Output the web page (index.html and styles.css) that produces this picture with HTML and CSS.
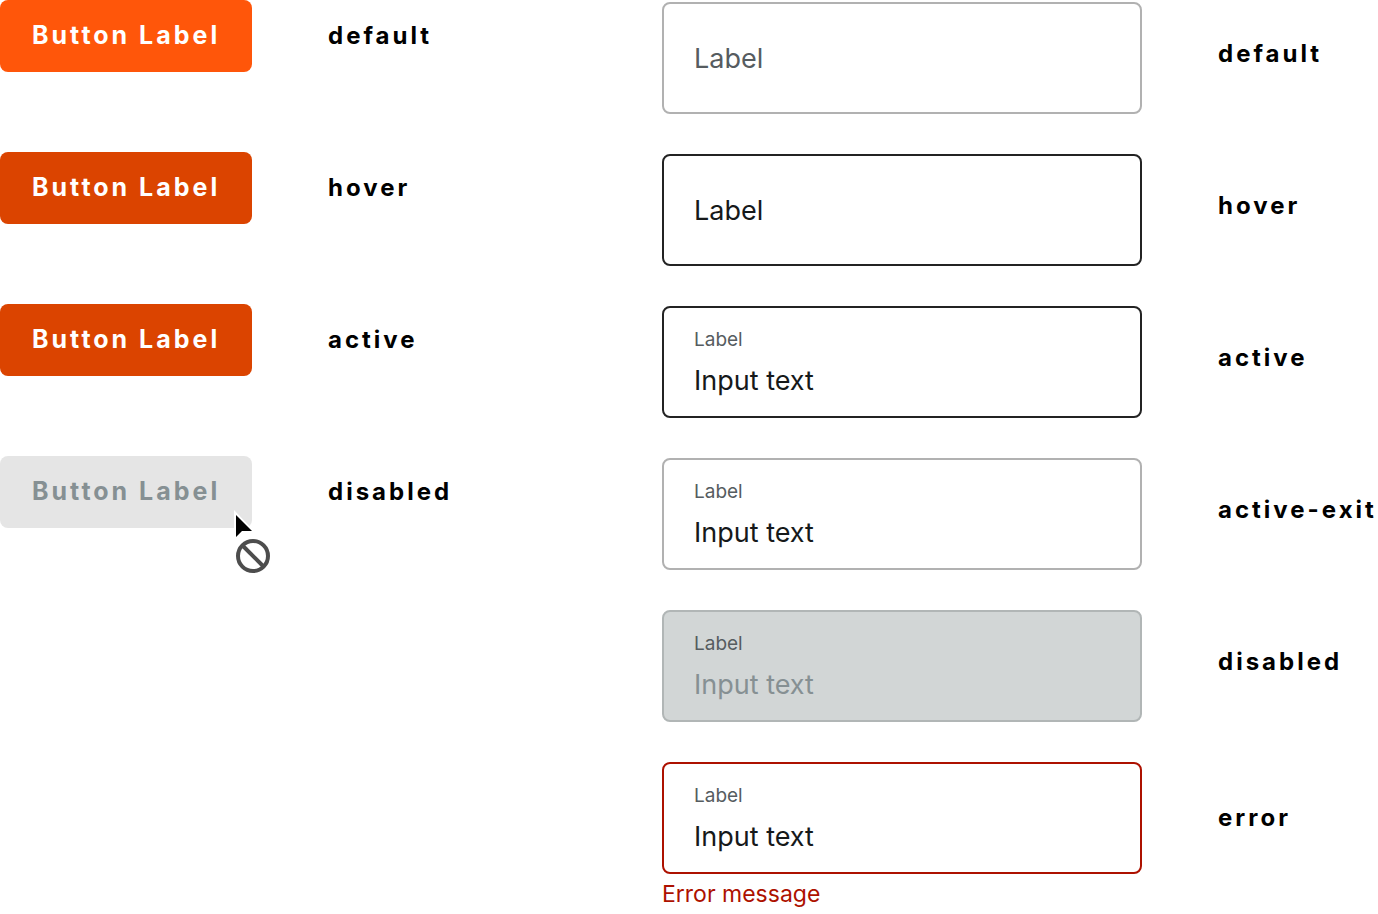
FILE: index.html
```html
<!DOCTYPE html>
<html lang="en">

<head>
    <meta charset="UTF-8">
    <meta name="viewport" content="width=device-width, initial-scale=1.0">
    <title>Button and Input States</title>
    <link rel="stylesheet" href="styles.css">
</head>

<body>

    <main class="states">

        <!-- Buttons -->
        <section class="buttons">
            <div class="button-row">
                <button type="button" class="btn">Button Label</button>
                <span class="state">default</span>
            </div>

            <div class="button-row">
                <button type="button" class="btn btn-hover">Button Label</button>
                <span class="state">hover</span>
            </div>

            <div class="button-row">
                <button type="button" class="btn btn-active">Button Label</button>
                <span class="state">active</span>
            </div>

            <div class="button-row">
                <button type="button" class="btn" disabled>Button Label</button>
                <span class="state">disabled</span>

                <svg class="cursor" viewBox="0 0 44 70" aria-hidden="true">
                    <path d="M4 4V35L12 27H26Z" fill="#fff" />
                    <path d="M6 9V31L12 25H22Z" fill="#000" />
                    <circle cx="23" cy="50" r="15" fill="#fff" stroke="#4d4d4d" stroke-width="4" />
                    <path d="M12.500 39.500L33.500 60.500" stroke="#4d4d4d" stroke-width="4" />
                </svg>
            </div>
        </section>

        <!-- Inputs -->
        <section class="inputs">
            <div class="input-row">
                <div class="field">
                    <input type="text" id="default" placeholder="Label" aria-label="Label">
                </div>
                <span class="state">default</span>
            </div>

            <div class="input-row">
                <div class="field field-hover">
                    <input type="text" id="hover" placeholder="Label" aria-label="Label">
                </div>
                <span class="state">hover</span>
            </div>

            <div class="input-row">
                <div class="field field-active">
                    <label for="active">Label</label>
                    <input type="text" id="active" value="Input text">
                </div>
                <span class="state">active</span>
            </div>

            <div class="input-row">
                <div class="field">
                    <label for="exit">Label</label>
                    <input type="text" id="exit" value="Input text">
                </div>
                <span class="state">active-exit</span>
            </div>

            <div class="input-row">
                <div class="field field-disabled">
                    <label for="disabled">Label</label>
                    <input type="text" id="disabled" value="Input text" disabled>
                </div>
                <span class="state">disabled</span>
            </div>

            <div class="input-row">
                <div>
                    <div class="field field-error">
                        <label for="error">Label</label>
                        <input type="text" id="error" value="Input text" aria-describedby="message">
                    </div>
                    <p class="message" id="message">Error message</p>
                </div>
                <span class="state state-error">error</span>
            </div>
        </section>

    </main>

</body>

</html>
```
FILE: styles.css
```css
* {
    box-sizing: border-box;
}

body {
    margin: 0;
    background-color: #fff;
    color: #000;
    font-family: Inter, "Liberation Sans", sans-serif;
}

.states {
    display: grid;
    grid-template-columns: 1fr 716px;
    align-items: start;
}

.buttons {
    display: grid;
    gap: 80px;
}

.button-row {
    display: flex;
    align-items: center;
    gap: 76px;
    position: relative;
}

.state {
    font-size: 24px;
    font-weight: 700;
    line-height: 32px;
    letter-spacing: 3px;
    white-space: nowrap;
}

.btn {
    width: 252px;
    height: 72px;
    padding: 0 0 2px 32px;
    border: none;
    border-radius: 8px;
    background-color: #ff560a;
    color: #fff;
    font-family: inherit;
    font-size: 25px;
    font-weight: 700;
    letter-spacing: 3px;
    text-align: left;
    white-space: nowrap;
    cursor: pointer;
}

.btn:hover,
.btn-hover,
.btn-active {
    background-color: #db4400;
}

.btn:disabled {
    background-color: #e5e5e5;
    color: #869093;
    cursor: not-allowed;
}

/* pointer lying over the disabled button */
.cursor {
    position: absolute;
    top: 50px;
    left: 230px;
    width: 44px;
    height: 70px;
}

.inputs {
    display: grid;
    gap: 40px;
    padding-top: 2px;
}

.input-row {
    display: grid;
    grid-template-columns: 480px 1fr;
    column-gap: 76px;
    align-items: start;
}

.input-row .state {
    padding-top: 36px;
}

.input-row .state-error {
    padding-top: 40px;
}

.field {
    display: flex;
    flex-direction: column;
    justify-content: center;
    height: 112px;
    padding: 0 30px;
    border: 2px solid #b1b1b1;
    border-radius: 8px;
}

.field label {
    color: #565c60;
    font-size: 19px;
    line-height: 24px;
}

.field input {
    width: 100%;
    height: 32px;
    padding: 0;
    border: none;
    outline: none;
    background-color: transparent;
    color: #16191a;
    font-family: inherit;
    font-size: 27px;
}

.field label + input {
    margin-top: 12px;
}

.field input::placeholder {
    color: #565c60;
    opacity: 1;
}

.field-hover,
.field-active {
    border-color: #232323;
}

.field-hover input::placeholder {
    color: #16191a;
}

.field-disabled {
    border-color: #b1b6b6;
    background-color: #d2d6d6;
}

.field-disabled input {
    color: #869093;
}

.field-error {
    border-color: #ad1100;
}

.message {
    margin: 4px 0 0;
    color: #ad1100;
    font-size: 23px;
    line-height: 32px;
}
```
